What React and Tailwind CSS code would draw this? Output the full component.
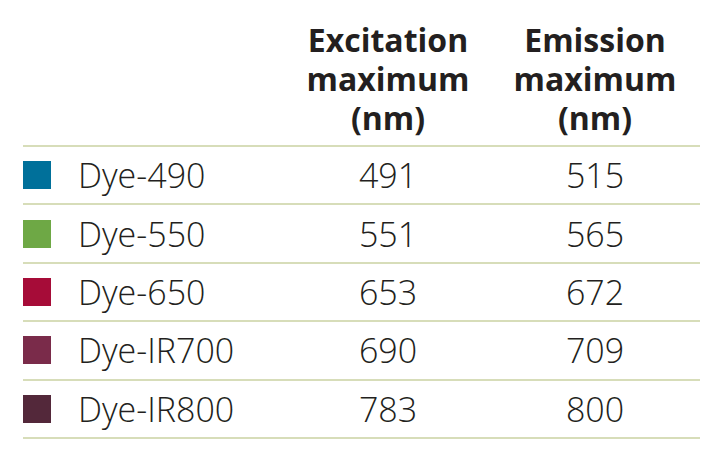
import React from "react";

const dyes = [
  { name: "Dye-490", color: "bg-[#00709a]", ex: 491, em: 515 },
  { name: "Dye-550", color: "bg-[#6ea845]", ex: 551, em: 565 },
  { name: "Dye-650", color: "bg-[#a60c38]", ex: 653, em: 672 },
  { name: "Dye-IR700", color: "bg-[#7a2b4a]", ex: 690, em: 709 },
  { name: "Dye-IR800", color: "bg-[#53283a]", ex: 783, em: 800 },
];

export default function App() {
  return (
    <div className="w-[703px] h-[455px] bg-white text-[#231f20] font-['Open_Sans',sans-serif]">
      <div className="ml-[23px] w-[677px]">
        {/* Header */}
        <div className="grid grid-cols-[263px_204px_210px] h-[147px] pt-[20px] border-b-2 border-[#d7ddb9] text-[32px] leading-[39px] font-bold text-center">
          <div />
          <div>
            Excitation
            <br />
            maximum
            <br />
            (nm)
          </div>
          <div>
            Emission
            <br />
            maximum
            <br />
            (nm)
          </div>
        </div>

        {/* Rows */}
        {dyes.map((d) => (
          <div
            key={d.name}
            className="grid grid-cols-[263px_204px_210px] h-[58.4px] items-center border-b-2 border-[#d7ddb9] text-[34px] font-light leading-none"
          >
            <div className="flex items-center gap-[27px]">
              <span className={`w-[28px] h-[28px] ${d.color}`} />
              <span>{d.name}</span>
            </div>
            <div className="text-center">{d.ex}</div>
            <div className="text-center">{d.em}</div>
          </div>
        ))}
      </div>
    </div>
  );
}
